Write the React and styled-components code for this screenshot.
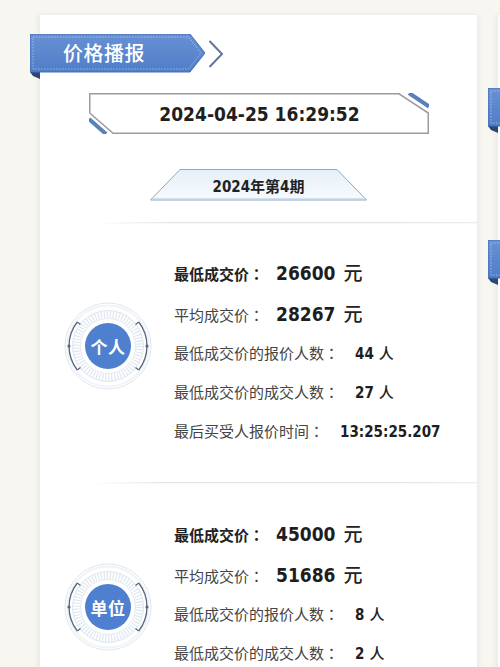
import React from "react";
import styled, { createGlobalStyle } from "styled-components";

const CJK = `"Noto Sans CJK SC", "Noto Sans", sans-serif`;
const CJK_TC = `"Noto Sans CJK TC", "Noto Sans CJK SC", sans-serif`;
const NUM = `"DejaVu Sans Condensed", "DejaVu Sans", "Noto Sans CJK SC", sans-serif`;

const GlobalStyle = createGlobalStyle`
  html, body { margin: 0; padding: 0; background: #f8f6f1; overflow: hidden; }
  body { font-family: ${CJK}; }
`;

const Page = styled.div`
  display: flex;
  align-items: flex-start;
  gap: 21px;
  padding: 15px 0 0 40px;
  width: max-content;
`;

const Card = styled.section`
  flex: none;
  width: 437px;
  min-height: 760px;
  box-sizing: border-box;
  padding-top: ${(p) => p.$top}px;
  background: #fff;
  box-shadow: -3px 0 5px rgba(0, 0, 0, 0.05), 3px 0 5px rgba(0, 0, 0, 0.04);
`;

const RibbonRow = styled.div`
  display: flex;
  align-items: flex-start;
  gap: 3px;
  margin-left: -10px;
`;

const RibbonBody = styled.div`
  display: grid;
  width: 175px;
  height: 45px;
  & > * { grid-area: 1 / 1; }
`;

const RibbonText = styled.span`
  align-self: start;
  justify-self: start;
  margin: 6px 0 0 33px;
  font-family: ${CJK};
  font-size: 20px;
  line-height: 26px;
  font-weight: 500;
  color: #fff;
  letter-spacing: 0.5px;
`;

const Chevron = styled.svg`
  margin-top: 6px;
  flex: none;
`;

const Ribbon = ({ title }) => (
  <RibbonRow>
    <RibbonBody>
      <svg width="175" height="45" viewBox="0 0 175 45">
        <defs>
          <linearGradient id="rb" x1="0" y1="0" x2="0" y2="1">
            <stop offset="0" stopColor="#6891d4" />
            <stop offset="1" stopColor="#4f7dc8" />
          </linearGradient>
        </defs>
        <polygon points="0,38 10,38 10,45 3,42" fill="#2c4675" />
        <polygon points="0,0 160,0 175,19 160,38 0,38" fill="url(#rb)" stroke="#4670b6" strokeWidth="1" />
        <polygon
          points="3,3 158.5,3 171,19 158.5,35 3,35"
          fill="none"
          stroke="rgba(255,255,255,0.55)"
          strokeWidth="0.8"
          strokeDasharray="1.5 1.5"
        />
      </svg>
      {title && <RibbonText>{title}</RibbonText>}
    </RibbonBody>
    {title && (
      <Chevron width="16" height="28" viewBox="0 0 16 28">
        <polyline points="1.5,1 14,14 1.5,27" fill="none" stroke="#60769a" strokeWidth="2" />
      </Chevron>
    )}
  </RibbonRow>
);

const DateBox = styled.div`
  display: grid;
  width: 340px;
  height: 41px;
  margin: 14px auto 0;
  & > * { grid-area: 1 / 1; }
`;

const DateText = styled.span`
  place-self: center;
  font-family: ${NUM};
  font-weight: 700;
  font-size: 19px;
  color: #1f1f1f;
  margin-left: 2px;
`;

const PeriodBox = styled.div`
  display: grid;
  width: 217px;
  height: 32px;
  margin: 35px auto 0;
  & > * { grid-area: 1 / 1; }
`;

const PeriodText = styled.span`
  place-self: center;
  font-family: ${NUM};
  font-weight: 700;
  font-size: 15px;
  color: #222;
`;

const Divider = styled.div`
  height: 1px;
  margin: ${(p) => p.$mt}px 0 0 ${(p) => p.$ml}px;
  background: linear-gradient(to right, rgba(225, 225, 222, 0), #e4e3df 18%, #e6e5e1 80%, #eeede9);
  box-shadow: 0 1px 1px rgba(0, 0, 0, 0.03);
`;

const Section = styled.div`
  display: flex;
  align-items: center;
  gap: 22px;
  padding: ${(p) => p.$pt}px 0 ${(p) => p.$pb}px 24px;
`;

const Badge = styled.div`
  display: grid;
  flex: none;
  width: 88px;
  height: 88px;
  margin-bottom: 9px;
  & > * { grid-area: 1 / 1; }
`;

const BadgeText = styled.span`
  place-self: center;
  font-family: ${CJK};
  font-weight: 700;
  font-size: 17px;
  color: #fff;
  letter-spacing: 0.5px;
`;

const Rows = styled.div`
  display: flex;
  flex-direction: column;
`;

const Row = styled.div`
  display: flex;
  align-items: baseline;
  height: ${(p) => (p.$big ? 41 : 39)}px;
  line-height: ${(p) => (p.$big ? 41 : 39)}px;
  white-space: nowrap;
`;

const Label = styled.span`
  font-family: ${CJK};
  font-size: 15px;
  color: ${(p) => (p.$strong ? "#222" : "#444")};
  font-weight: ${(p) => (p.$strong ? 700 : 400)};
`;

const Colon = styled.span`
  font-family: ${CJK_TC};
`;

const Value = styled.span`
  margin-left: ${(p) => (p.$big ? 12 : 16)}px;
  font-family: ${NUM};
  font-weight: 700;
  font-size: ${(p) => (p.$big ? 19 : 15)}px;
  color: #1e1e1e;
`;

const Unit = styled.span`
  margin-left: ${(p) => (p.$big ? 8 : 5)}px;
  font-family: ${CJK};
  font-weight: 500;
  font-size: ${(p) => (p.$big ? 19 : 15)}px;
  color: #222;
`;

const Spacer = styled.div`
  height: ${(p) => p.$h}px;
`;

const BadgeArt = () => {
  const c = 44;
  return (
    <svg width="88" height="88" viewBox="0 0 88 88">
      <circle cx={c} cy={c} r="43" fill="#fff" stroke="#e1e6ed" strokeWidth="1" />
      <circle cx={c} cy={c} r="40.5" fill="none" stroke="#f0f3f7" strokeWidth="2" />
      <circle cx={c} cy={c} r="31.5" fill="none" stroke="#c5d4e6" strokeWidth="7" strokeDasharray="1.2 1.8" opacity="0.55" />
      <circle cx={c} cy={c} r="35.5" fill="none" stroke="#d4deea" strokeWidth="0.8" />
      <circle cx={c} cy={c} r="27.5" fill="none" stroke="#dce5ef" strokeWidth="0.8" />
      <path d="M13.3 20 A39 39 0 0 0 13.3 68" fill="none" stroke="#56677e" strokeWidth="1.3" />
      <path d="M74.7 20 A39 39 0 0 1 74.7 68" fill="none" stroke="#56677e" strokeWidth="1.3" />
      <path d="M13.3 20 L16.5 22.5 M13.3 68 L16.5 65.5 M74.7 20 L71.5 22.5 M74.7 68 L71.5 65.5" stroke="#56677e" strokeWidth="1.2" />
      <circle cx="5" cy={c} r="1.6" fill="#56677e" />
      <circle cx="83" cy={c} r="1.6" fill="#56677e" />
      <circle cx={c} cy={c} r="24.5" fill="#fff" />
      <circle cx={c} cy={c} r="23" fill="#4f7fcf" />
    </svg>
  );
};

const personal = [
  { label: "最低成交价", value: "26600", unit: "元", big: true, strong: true },
  { label: "平均成交价", value: "28267", unit: "元", big: true },
  { label: "最低成交价的报价人数", value: "44", unit: "人" },
  { label: "最低成交价的成交人数", value: "27", unit: "人" },
  { label: "最后买受人报价时间", value: "13:25:25.207" },
];

const company = [
  { label: "最低成交价", value: "45000", unit: "元", big: true, strong: true },
  { label: "平均成交价", value: "51686", unit: "元", big: true },
  { label: "最低成交价的报价人数", value: "8", unit: "人" },
  { label: "最低成交价的成交人数", value: "2", unit: "人" },
  { label: "最后买受人报价时间", value: "11:29:58.312" },
];

const Result = ({ badge, rows, pt, pb }) => (
  <Section $pt={pt} $pb={pb}>
    <Badge>
      <BadgeArt />
      <BadgeText>{badge}</BadgeText>
    </Badge>
    <Rows>
      {rows.map((r) => (
        <Row key={r.label + r.value} $big={r.big}>
          <Label $strong={r.strong}>
            {r.label}
            <Colon>：</Colon>
          </Label>
          <Value $big={r.big}>{r.value}</Value>
          {r.unit && <Unit $big={r.big}>{r.unit}</Unit>}
        </Row>
      ))}
    </Rows>
  </Section>
);

export default function App() {
  return (
    <>
      <GlobalStyle />
      <Page>
        <Card $top={19}>
          <Ribbon title="价格播报" />
          <DateBox>
            <svg width="340" height="41" viewBox="0 0 340 41">
              <polygon
                points="0.75,0.75 310,0.75 339.25,20 339.25,40.25 24,40.25 0.75,20"
                fill="#fff"
                stroke="#9c9c9c"
                strokeWidth="1.5"
              />
              <line x1="320" y1="0" x2="340" y2="13.5" stroke="#5a80bb" strokeWidth="4" />
              <line x1="0" y1="26" x2="17" y2="41" stroke="#5a80bb" strokeWidth="4" />
            </svg>
            <DateText>2024-04-25 16:29:52</DateText>
          </DateBox>
          <PeriodBox>
            <svg width="217" height="32" viewBox="0 0 217 32">
              <defs>
                <linearGradient id="pb" x1="0" y1="0" x2="0" y2="1">
                  <stop offset="0" stopColor="#e6f0f8" />
                  <stop offset="1" stopColor="#f7fafd" />
                </linearGradient>
              </defs>
              <polygon points="30,0.5 187,0.5 216.5,31 0.5,31" fill="url(#pb)" stroke="#8ea8c1" strokeWidth="1" />
              <line x1="2" y1="29.5" x2="215" y2="29.5" stroke="#cfe0ef" strokeWidth="1" />
            </svg>
            <PeriodText>2024年第4期</PeriodText>
          </PeriodBox>
          <Divider $mt={21} $ml={65} />
          <Result badge="个人" rows={personal} pt={28} pb={32} />
          <Divider $mt={0} $ml={60} />
          <Result badge="单位" rows={company} pt={29} pb={30} />
        </Card>
        <Card $top={73}>
          <Ribbon />
          <Spacer $h={107} />
          <Ribbon />
        </Card>
      </Page>
    </>
  );
}
